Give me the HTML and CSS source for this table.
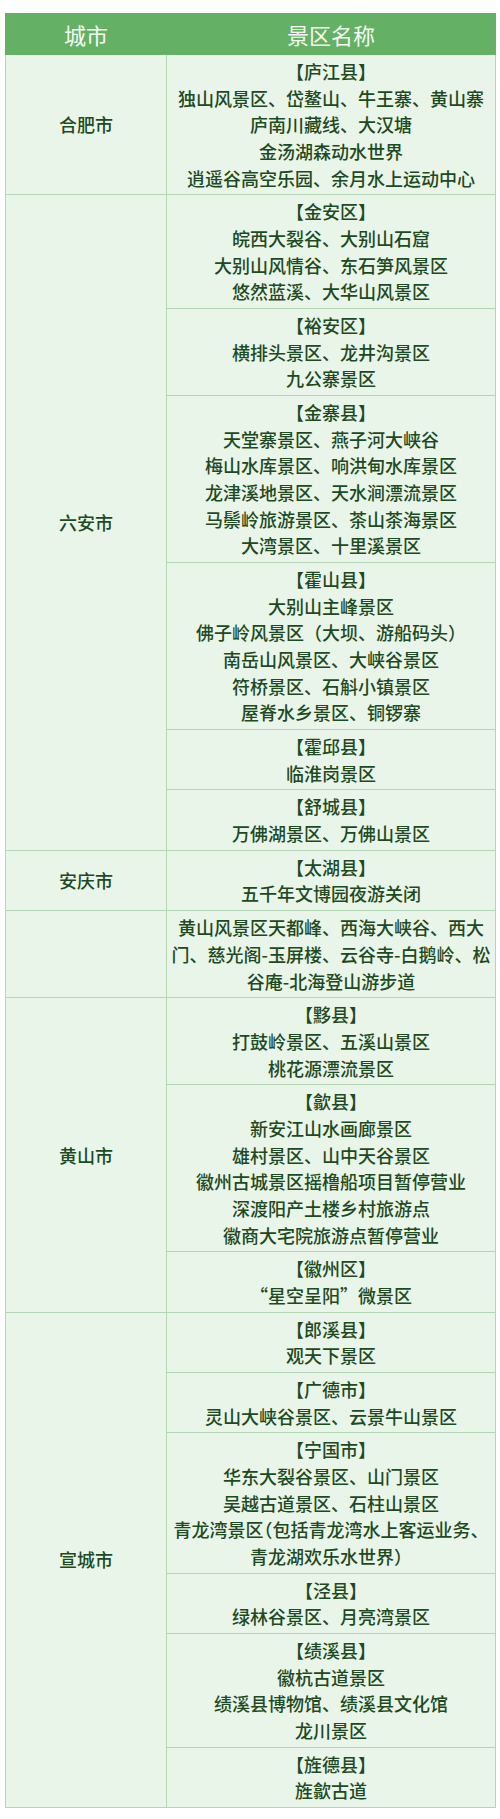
FILE: index.html
```html
<!DOCTYPE html>
<html lang="zh-CN">
<head>
<meta charset="utf-8">
<title>景区名称</title>
<link rel="stylesheet" href="styles.css">
</head>
<body>
<div class="page">
<table class="spots">
  <colgroup><col class="col-city"><col class="col-spot"></colgroup>
  <thead>
    <tr><th>城市</th><th>景区名称</th></tr>
  </thead>
  <tbody>
    <tr><td class="city">合肥市</td><td>【庐江县】<br>独山风景区、岱鳌山、牛王寨、黄山寨<br>庐南川藏线、大汉塘<br>金汤湖森动水世界<br>逍遥谷高空乐园、余月水上运动中心</td></tr>
    <tr><td class="city" rowspan="6">六安市</td><td>【金安区】<br>皖西大裂谷、大别山石窟<br>大别山风情谷、东石笋风景区<br>悠然蓝溪、大华山风景区</td></tr>
    <tr><td>【裕安区】<br>横排头景区、龙井沟景区<br>九公寨景区</td></tr>
    <tr><td>【金寨县】<br>天堂寨景区、燕子河大峡谷<br>梅山水库景区、响洪甸水库景区<br>龙津溪地景区、天水涧漂流景区<br>马鬃岭旅游景区、茶山茶海景区<br>大湾景区、十里溪景区</td></tr>
    <tr><td>【霍山县】<br>大别山主峰景区<br>佛子岭风景区（大坝、游船码头）<br>南岳山风景区、大峡谷景区<br>符桥景区、石斛小镇景区<br>屋脊水乡景区、铜锣寨</td></tr>
    <tr><td>【霍邱县】<br>临淮岗景区</td></tr>
    <tr><td>【舒城县】<br>万佛湖景区、万佛山景区</td></tr>
    <tr><td class="city">安庆市</td><td>【太湖县】<br>五千年文博园夜游关闭</td></tr>
    <tr><td class="city"></td><td>黄山风景区天都峰、西海大峡谷、西大<br>门、慈光阁-玉屏楼、云谷寺-白鹅岭、松<br>谷庵-北海登山游步道</td></tr>
    <tr><td class="city" rowspan="3">黄山市</td><td>【黟县】<br>打鼓岭景区、五溪山景区<br>桃花源漂流景区</td></tr>
    <tr><td>【歙县】<br>新安江山水画廊景区<br>雄村景区、山中天谷景区<br>徽州古城景区摇橹船项目暂停营业<br>深渡阳产土楼乡村旅游点<br>徽商大宅院旅游点暂停营业</td></tr>
    <tr><td>【徽州区】<br>“星空呈阳”微景区</td></tr>
    <tr><td class="city" rowspan="6">宣城市</td><td>【郎溪县】<br>观天下景区</td></tr>
    <tr><td>【广德市】<br>灵山大峡谷景区、云景牛山景区</td></tr>
    <tr><td>【宁国市】<br>华东大裂谷景区、山门景区<br>吴越古道景区、石柱山景区<br>青龙湾景区<span class="half">（</span>包括青龙湾水上客运业务、<br>青龙湖欢乐水世界）</td></tr>
    <tr><td>【泾县】<br>绿林谷景区、月亮湾景区</td></tr>
    <tr><td>【绩溪县】<br>徽杭古道景区<br>绩溪县博物馆、绩溪县文化馆<br>龙川景区</td></tr>
    <tr><td>【旌德县】<br>旌歙古道</td></tr>
  </tbody>
</table>
</div>
</body>
</html>
```

FILE: styles.css
```css
html, body {
  margin: 0;
  padding: 0;
  background: #ffffff;
}

.page {
  padding: 13px 5px 14px 5px;
  font-family: "Noto Sans CJK SC", "Noto Sans", sans-serif;
}

.spots {
  width: 490px;
  border-collapse: collapse;
  table-layout: fixed;
  background: #eaf5ea;
}

.col-city { width: 161px; }
.col-spot { width: 329px; }

.spots th {
  background: #64b166;
  color: #f4faf3;
  font-size: 22px;
  font-weight: 400;
  line-height: 30px;
  padding: 5px 4px;
  text-align: center;
  border: 1px solid #64b166;
  border-left-color: #7cbf7d;
}

.spots th:first-child {
  border-left-color: #64b166;
}

.spots td {
  border: 1px solid #b3d7b4;
  color: #1d4a21;
  font-size: 18px;
  font-weight: 500;
  line-height: 26.67px;
  padding: 3px 4px;
  text-align: center;
  vertical-align: middle;
}

.half {
  font-feature-settings: "halt";
}
```
